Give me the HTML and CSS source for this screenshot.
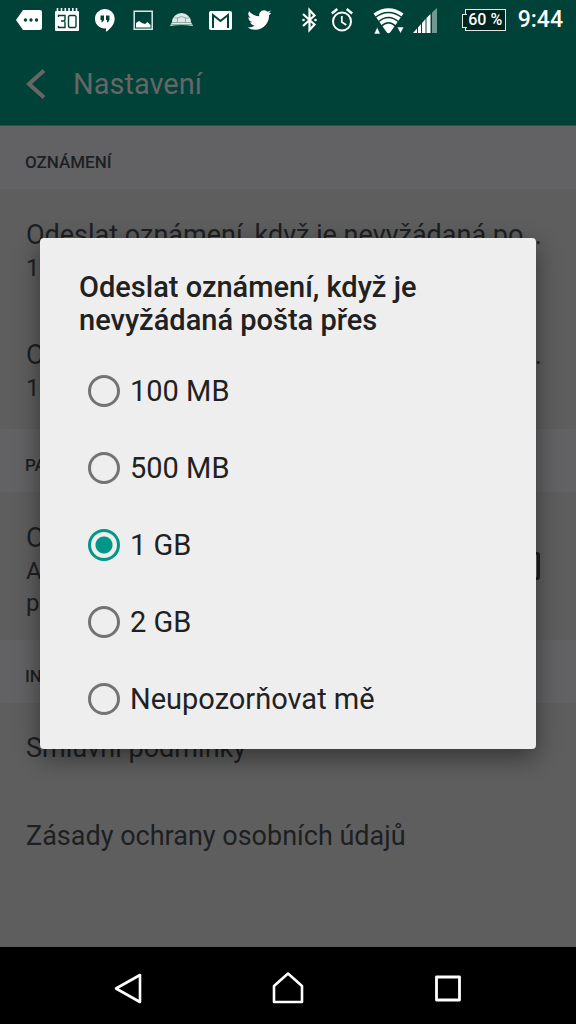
FILE: index.html
```html
<!DOCTYPE html>
<html lang="cs">
<head>
<meta charset="utf-8">
<meta name="viewport" content="width=device-width, initial-scale=1">
<title>Nastavení</title>
<link rel="stylesheet" href="styles.css">
</head>
<body>
<div class="screen">
  <header class="top">
    <div class="status">
      <div class="notifications">
        <svg width="28" height="28" viewBox="0 0 28 28"><path fill="#fff" d="M8 4h17q2 0 2 2v16q0 2-2 2H8L1 14z"/><g fill="#004238"><circle cx="10.500" cy="14" r="1.700"/><circle cx="16" cy="14" r="1.700"/><circle cx="21.500" cy="14" r="1.700"/></g></svg>
        <svg width="28" height="28" viewBox="0 0 28 28"><path fill="#fff" d="M3 5h22q1 0 1 1v18q0 1-1 1H3q-1 0-1-1V6q0-1 1-1z"/><path stroke="#fff" stroke-width="1.600" d="M4.500 2v4M8.500 2v4M12.300 2v4M16 2v4M19.800 2v4M23.500 2v4"/><path fill="none" stroke="#004238" stroke-width="1.400" d="M5.500 11V9.500h6.500V14l-1 1H8M11 15l1 1v5.500H5.500V20M16.500 9.500H22l1 1v10l-1 1h-5.500l-1-1v-10z"/></svg>
        <svg width="28" height="28" viewBox="0 0 28 28"><path fill="#fff" d="M14 3a9.700 9.700 0 0 1 9.700 9.700C23.700 18 19.500 23 15 25.800V22.300A9.700 9.700 0 1 1 14 3z"/><path fill="#004238" d="M9.500 9.500H13v4q0 2-2.500 3v-2.500h-1zM15 9.500h3.500v4q0 2-2.500 3v-2.500h-1z"/></svg>
        <svg width="28" height="28" viewBox="0 0 28 28"><path fill="none" stroke="#dfe8e6" stroke-width="1.500" d="M5.200 5.200h18v18h-18z"/><path fill="#fff" d="M7 21.500V17l3-2 3 2 3 1 2.500-2 3 3v2.500z"/></svg>
        <svg width="28" height="28" viewBox="0 0 28 28"><path fill="#dfe8e6" d="M5 16a9.500 9 0 0 1 19 0l2 4q-11.500-2-23 0z"/><path fill="none" stroke="#8fada7" stroke-width="1" d="M5 16.500h19M10.500 17V12q4-3 8 0v5M7.500 12h4M18 12h4M4 18.500h21"/></svg>
        <svg width="28" height="28" viewBox="0 0 28 28"><rect x="4" y="5" width="23" height="19" rx="2" fill="#fff"/><path fill="none" stroke="#004238" stroke-width="2" d="M8 22V9l7.500 6L23 9v13"/></svg>
        <svg width="28" height="28" viewBox="0 0 28 28"><g transform="translate(4.500 2)"><path fill="#fff" d="M23.950 4.570a10 10 0 0 1-2.820.770 4.960 4.960 0 0 0 2.160-2.720c-.950.550-2 .960-3.130 1.180a4.920 4.920 0 0 0-8.380 4.480C7.690 8.100 4.070 6.130 1.640 3.160a4.930 4.930 0 0 0 1.520 6.570 4.900 4.900 0 0 1-2.230-.610v.060a4.920 4.920 0 0 0 3.950 4.830 5 5 0 0 1-2.210.080 4.940 4.940 0 0 0 4.600 3.420A9.870 9.870 0 0 1 0 19.540a14 14 0 0 0 7.550 2.210c9.050 0 14-7.500 14-13.990l-.02-.630a9.900 9.900 0 0 0 2.420-2.560z"/></g></svg>
      </div>
      <div class="system">
        <svg class="bluetooth" width="15" height="28" viewBox="0 0 15 28"><path fill="none" stroke="#fff" stroke-width="2.200" d="M1 8l11.500 10.500L7.500 24V4l5 5.500L1 20"/><circle cx="1.500" cy="14" r="1.300" fill="#fff"/><circle cx="13.500" cy="14" r="1.300" fill="#fff"/></svg>
        <svg width="22" height="28" viewBox="0 0 22 28"><g fill="none" stroke="#fff"><circle cx="11" cy="15.500" r="9" stroke-width="2"/><path stroke-width="1.800" d="M10.800 10v6l4.500 3"/><path stroke-width="2.400" d="M.8 7.500L6.300 3M21.200 7.500L15.700 3"/></g></svg>
        <svg class="wifi" width="32" height="28" viewBox="0 0 32 28"><path fill="#fff" d="M.5 7.500Q15.500-3 30.500 7.500L17.500 26q-2 2.500-4 0z"/><g fill="none" stroke="#004238" stroke-width="1.500"><path d="M2 11.500Q15.500 1.500 29 11.500"/><path d="M5 16Q15.500 7 26 16"/><path d="M8 20.500Q15.500 13 23 20.500"/></g><path fill="#fff" stroke="#004238" stroke-width=".6" d="M1 28l3.200-7 3.200 7zM24 21h7l-3.500 6.500z"/></svg>
        <svg class="signal" width="25" height="28" viewBox="0 0 25 28"><path fill="#fff" d="M0 27l4-4.500V27zM5 27v-5.500L8 18v9zM9 27V17l3.500-4v14zM13.500 27V12L17.500 8v19z"/><path fill="#719790" d="M19 27V6.500L24 2v25z"/></svg>
        <div class="battery">60 %</div>
        <time class="clock">9:44</time>
      </div>
    </div>
    <div class="appbar">
      <button class="back" aria-label="Zpět"><svg width="20" height="30" viewBox="0 0 20 30"><path fill="none" stroke="#666" stroke-width="4" d="M18 1.500L3 15l15 13.500"/></svg></button>
      <h1 class="page-title">Nastavení</h1>
    </div>
  </header>

  <main class="settings">
    <h2 class="section">Oznámení</h2>
    <div class="item">
      <div class="name">Odeslat oznámení, když je nevyžádaná pošta přes</div>
      <div class="value">1 GB</div>
    </div>
    <div class="item">
      <div class="name">Odeslat oznámení, když je nevyžádaná pošta přes</div>
      <div class="value">1 GB</div>
    </div>
    <h2 class="section">Paměť</h2>
    <label class="item check-item">
      <span class="check-text">
        <span class="name">Ochrana</span>
        <span class="value">Automaticky<br>při spuštění</span>
      </span>
      <input class="check" type="checkbox">
    </label>
    <h2 class="section">Informace</h2>
    <a class="item link" href="#terms">Smluvní podmínky</a>
    <a class="item link" href="#privacy">Zásady ochrany osobních údajů</a>
  </main>

  <nav class="navbar">
    <button class="key" aria-label="Zpět"><svg width="32" height="36" viewBox="0 0 32 36"><path fill="none" stroke="#fff" stroke-width="2.600" stroke-linejoin="round" d="M28 5v27L4 18.500z"/></svg></button>
    <button class="key" aria-label="Domů"><svg width="32" height="36" viewBox="0 0 32 36"><path fill="none" stroke="#fff" stroke-width="2.600" stroke-linejoin="round" d="M2 32V16L16 3.500 30 16v16z"/></svg></button>
    <button class="key" aria-label="Přehled"><svg width="32" height="36" viewBox="0 0 32 36"><path fill="none" stroke="#fff" stroke-width="2.800" stroke-linejoin="round" d="M4.500 7h23v23h-23z"/></svg></button>
  </nav>

  <div class="overlay">
    <form class="dialog" role="dialog" aria-labelledby="dialog-title">
      <h2 class="dialog-title" id="dialog-title">Odeslat oznámení, když je nevyžádaná pošta přes</h2>
      <label class="option"><input class="radio" type="radio" name="limit">100 MB</label>
      <label class="option"><input class="radio" type="radio" name="limit">500 MB</label>
      <label class="option"><input class="radio" type="radio" name="limit" checked>1 GB</label>
      <label class="option"><input class="radio" type="radio" name="limit">2 GB</label>
      <label class="option"><input class="radio" type="radio" name="limit">Neupozorňovat mě</label>
    </form>
  </div>
</div>
</body>
</html>
```
FILE: styles.css
```css
* {
  box-sizing: border-box;
}

body {
  margin: 0;
  background: #5e5e5e;
  color: #1d1f22;
  font-family: Roboto, "Noto Sans", sans-serif;
}

h1,
h2 {
  margin: 0;
}

button {
  display: flex;
  padding: 0;
  border: 0;
  background: none;
}

svg {
  display: block;
  flex: none;
}

.screen {
  position: relative;
  display: flex;
  flex-direction: column;
  min-height: 100vh;
}

.top {
  background: #004238;
  border-bottom: 1px solid #30524d;
}

.status {
  display: flex;
  align-items: center;
  justify-content: space-between;
  height: 40px;
  padding: 0 13px 0 15px;
}

.notifications {
  display: flex;
  gap: 10px;
}

.system {
  display: flex;
  align-items: center;
  gap: 8px;
  color: #fff;
}

.bluetooth {
  margin-right: 6px;
}

.wifi {
  margin-left: 12px;
}

.signal {
  margin-right: 16px;
}

.battery {
  position: relative;
  width: 41px;
  margin-left: 3px;
  border: 1px solid #dfe8e6;
  background: #00241e;
  font-size: 16px;
  font-weight: 500;
  line-height: 20px;
  text-align: center;
  white-space: nowrap;
}

.battery::before {
  content: "";
  position: absolute;
  top: 4px;
  left: -4px;
  width: 4px;
  height: 12px;
  border: 1px solid #dfe8e6;
  border-right: 0;
  background: #00241e;
}

.clock {
  margin-left: 4px;
  font-size: 23px;
  font-weight: 500;
  line-height: 28px;
}

.appbar {
  display: flex;
  align-items: center;
  gap: 27px;
  height: 85px;
  padding: 2px 0 0 26px;
}

.page-title {
  color: #666;
  font-size: 29px;
  font-weight: 400;
  line-height: 34px;
}

.settings {
  flex: 1;
}

.section {
  padding: 24px 25px 15px;
  background: #626264;
  font-size: 17px;
  font-weight: 500;
  line-height: 24px;
  text-transform: uppercase;
}

.item {
  display: block;
  padding: 29px 34px 25px 26px;
}

.name {
  display: block;
  overflow: hidden;
  font-size: 27px;
  line-height: 34px;
  text-overflow: ellipsis;
  white-space: nowrap;
}

.value {
  display: block;
  font-size: 24px;
  line-height: 32px;
}

.check-item {
  display: flex;
  align-items: flex-start;
  justify-content: space-between;
  padding: 29px 36px 21px 26px;
}

.check {
  appearance: none;
  width: 28px;
  height: 28px;
  margin: 31px 0 0;
  border: 3px solid #1d1f22;
  border-radius: 3px;
}

.link {
  padding: 28px 26px 26px;
  color: #1d1f22;
  font-size: 27px;
  line-height: 34px;
  text-decoration: none;
}

.navbar {
  display: flex;
  align-items: center;
  justify-content: center;
  gap: 128px;
  height: 77px;
  padding-top: 4px;
  background: #000;
}

.overlay {
  position: absolute;
  inset: 40px 0 77px;
  display: flex;
  align-items: center;
  padding: 0 40px;
}

.dialog {
  flex: 1;
  padding: 33px 39px 12px;
  border-radius: 4px;
  background: #eee;
  box-shadow: 0 8px 24px rgb(0 0 0 / 45%);
  color: #212121;
}

.dialog-title {
  margin-bottom: 15px;
  font-size: 29px;
  font-weight: 500;
  line-height: 33px;
}

.option {
  display: flex;
  align-items: center;
  gap: 10px;
  height: 77px;
  padding-left: 9px;
  font-size: 29px;
}

.radio {
  appearance: none;
  width: 32px;
  height: 32px;
  margin: 0;
  border: 3px solid #737373;
  border-radius: 50%;
}

.radio:checked {
  border-color: #009688;
  background: radial-gradient(circle, #009688 8px, transparent 9px);
}
```
